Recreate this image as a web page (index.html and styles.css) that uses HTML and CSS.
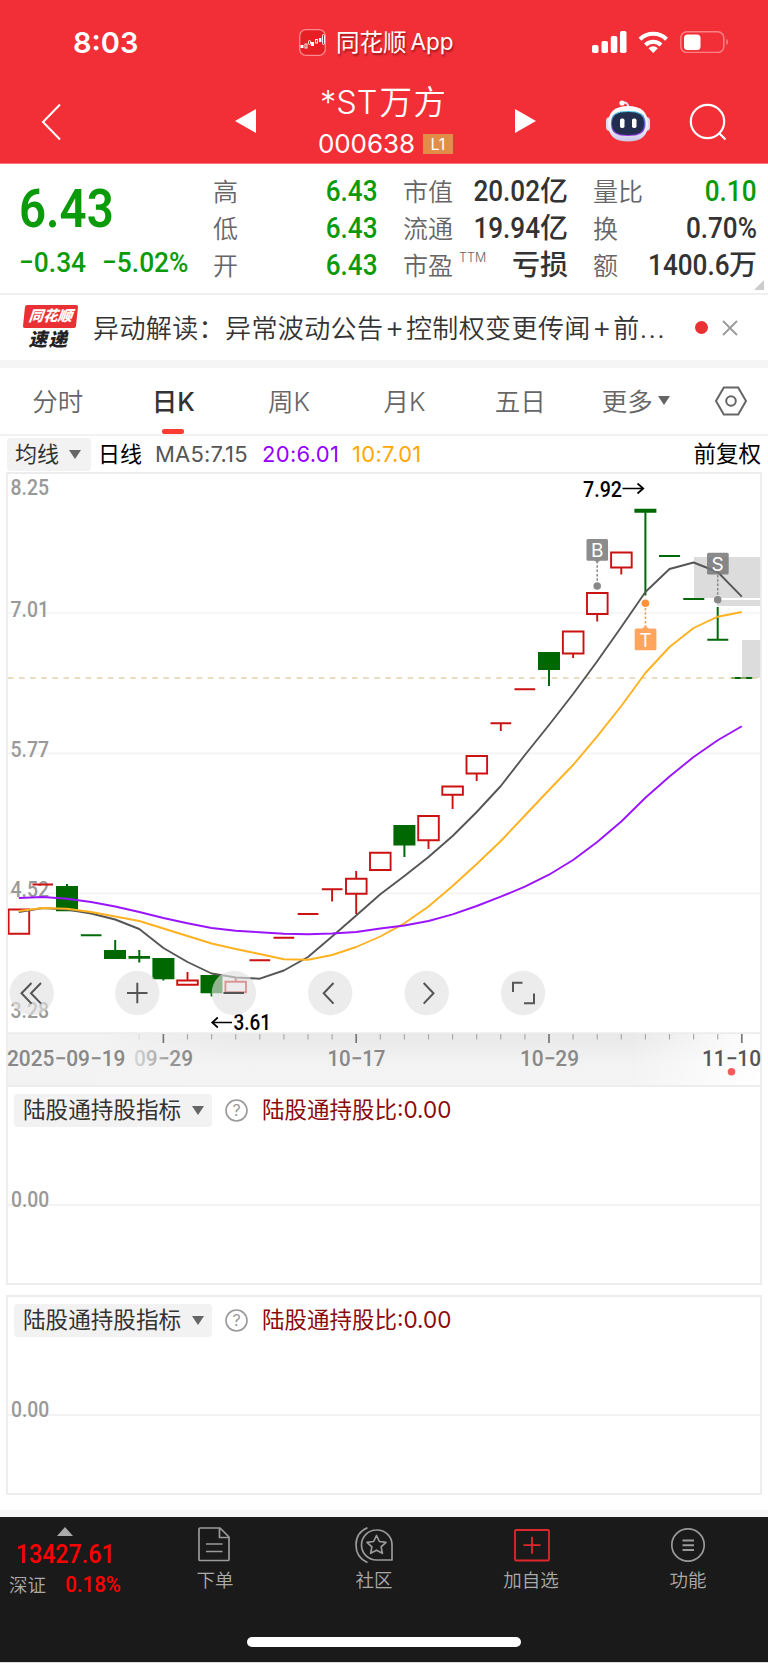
FILE: index.html
```html
<!DOCTYPE html>
<html lang="zh-CN">
<head>
<meta charset="utf-8">
<title>*ST万方 000638</title>
<link rel="stylesheet" href="styles.css">
</head>
<body>
<header class="top">
  <div class="status">
    <span class="clock">8:03</span>
    <span class="app">
      <svg class="app-icon" width="27" height="27" viewBox="0 0 27 27"><rect x=".7" y=".7" width="25.6" height="25.6" rx="6" fill="#e51f24" stroke="#f9898c" stroke-width="1.3"/><g fill="#fff"><rect x="1.5" y="16" width="3" height="3"/><rect x="12" y="13" width="3" height="4"/><rect x="20" y="9" width="2.4" height="4"/></g><g fill="none" stroke="#fff" stroke-width=".9"><rect x="6" y="15" width="2" height="4"/><rect x="9.500" y="11.500" width="2" height="4" rx="1"/><rect x="16.500" y="10.500" width="2" height="3.500"/><rect x="23.500" y="5.500" width="2" height="10" rx="1"/></g></svg>
      <span>同花顺</span><span class="app-latin">App</span>
    </span>
    <svg class="sys" width="136" height="22" viewBox="0 0 136 22">
      <g fill="#fff"><rect x="0" y="14" width="6.500" height="8" rx="1.800"/><rect x="9.500" y="10" width="6.500" height="12" rx="1.800"/><rect x="18.800" y="5" width="6.500" height="17" rx="1.800"/><rect x="28" y="0" width="6.500" height="22" rx="1.800"/></g>
      <g fill="none" stroke="#fff" stroke-width="4"><path d="M48 8.200a19 19 0 0 1 26.500 0"/><path d="M53.500 14a11 11 0 0 1 15.500 0"/></g><path d="M61.200 22l-4.700-4.800a6.800 6.800 0 0 1 9.400 0z" fill="#fff"/>
      <rect x="88.800" y=".8" width="43" height="20.800" rx="6" fill="none" stroke="#f88286" stroke-width="1.500"/><rect x="92" y="3.500" width="16.500" height="15.500" rx="3.500" fill="#fff"/><path d="M134.300 7.500q3.500 3.500 0 7z" fill="#f88286"/>
    </svg>
  </div>
  <div class="titlebar">
    <svg class="back" width="22" height="38" viewBox="0 0 22 38"><path d="M20 1.500L3 19l17 17.500" fill="none" stroke="#fff" stroke-width="2"/></svg>
    <svg class="prev" width="21" height="24" viewBox="0 0 21 24"><path d="M21 0v24L0 12z" fill="#fff"/></svg>
    <div class="stock">
      <div class="name">*ST<span class="cn">万方</span></div>
      <div class="code">000638<span class="level">L1</span></div>
    </div>
    <svg class="next" width="21" height="24" viewBox="0 0 21 24"><path d="M0 0v24l21-12z" fill="#fff"/></svg>
    <svg class="robot" width="46" height="44" viewBox="0 0 46 44">
      <defs><linearGradient id="shell" x1="0" y1="0" x2="0" y2="1"><stop offset="0" stop-color="#fff"/><stop offset=".7" stop-color="#e9e9fa"/><stop offset="1" stop-color="#c9c4e4"/></linearGradient><linearGradient id="visor" x1="0" y1="0" x2="0" y2="1"><stop offset="0" stop-color="#45bfe0"/><stop offset=".5" stop-color="#5a5fc8"/><stop offset="1" stop-color="#9b3ee0"/></linearGradient></defs>
      <path d="M17 4q6-2 6.500 5" fill="none" stroke="#e8e5f5" stroke-width="2"/><circle cx="17" cy="4" r="2.600" fill="#fff"/>
      <rect x="1" y="18" width="8" height="14" rx="4" fill="#dcdcf0"/><rect x="37" y="18" width="8" height="14" rx="4" fill="#dcdcf0"/>
      <path d="M23 7C36 7 43 13 43 25S36 42.500 23 42.500 3 37 3 25 10 7 23 7z" fill="url(#shell)"/>
      <path d="M23 12C35 12 40.500 15 40.500 24.500S35 37 23 37 6 34 6 24.500 11 12 23 12z" fill="url(#visor)"/>
      <path d="M23 13C34 13 39 16 39 24.500S34 36 23 36 7 33 7 24.500 12 13 23 13z" fill="#232d4d"/>
      <rect x="15" y="19.500" width="4.500" height="9.500" rx="1.800" fill="#fff"/><rect x="27" y="19.500" width="4.500" height="9.500" rx="1.800" fill="#fff"/>
    </svg>
    <svg class="search" width="38" height="38" viewBox="0 0 38 38" fill="none" stroke="#fff" stroke-width="2.200"><circle cx="18.500" cy="18.500" r="16.700"/><path d="M30 30l6.500 6.500"/></svg>
  </div>
</header>

<section class="quote">
  <div class="price">
    <div class="last"><span class="n">6.43</span></div>
    <div class="change"><span class="n chg">−0.34</span><span class="n pct">−5.02%</span></div>
  </div>
  <dl class="col c1">
    <dt>高</dt><dd class="down"><span class="n">6.43</span></dd>
    <dt>低</dt><dd class="down"><span class="n">6.43</span></dd>
    <dt>开</dt><dd class="down"><span class="n">6.43</span></dd>
  </dl>
  <dl class="col c2">
    <dt>市值</dt><dd><span class="n">20.02</span>亿</dd>
    <dt>流通</dt><dd><span class="n">19.94</span>亿</dd>
    <dt>市盈<sup>TTM</sup></dt><dd>亏损</dd>
  </dl>
  <dl class="col c3">
    <dt>量比</dt><dd class="down"><span class="n">0.10</span></dd>
    <dt>换</dt><dd><span class="n">0.70%</span></dd>
    <dt>额</dt><dd><span class="n">1400.6</span>万</dd>
  </dl>
  <i class="corner"></i>
</section>

<section class="news">
  <div class="news-logo"><span class="logo-top">同花顺</span><span class="logo-bottom">速递</span></div>
  <p class="news-text">异动解读：异常波动公告<span class="plus">+</span>控制权变更传闻<span class="plus">+</span>前<span class="dots">...</span></p>
  <i class="dot"></i>
  <svg class="close" width="16" height="16" viewBox="0 0 16 16"><path d="M1 1l14 14M15 1L1 15" stroke="#999" stroke-width="1.800"/></svg>
</section>

<nav class="tabs">
  <span>分时</span><span class="on">日K</span><span>周K</span><span>月K</span><span>五日</span><span>更多<i class="tri"></i></span>
  <span><svg width="32" height="30" viewBox="0 0 32 30" fill="none" stroke="#666" stroke-width="2"><path d="M8.800 1.500h14.400L31 15l-7.800 13.500H8.800L1 15z"/><circle cx="16" cy="15" r="4.800"/></svg></span>
</nav>

<div class="legend">
  <span class="chip">均线<i class="tri"></i></span>
  <span class="period">日线</span>
  <span class="ma5">MA5:7.15</span><span class="ma20">20:6.01</span><span class="ma10">10:7.01</span>
  <span class="adjust">前复权</span>
</div>

<svg class="chart" width="768" height="613" viewBox="0 472 768 613">
  <defs>
    <linearGradient id="barV" x1="0" y1="0" x2="0" y2="1"><stop offset="0" stop-color="#e8e8e8"/><stop offset=".6" stop-color="#f3f3f3"/><stop offset="1" stop-color="#f4f4f4"/></linearGradient>
    <linearGradient id="fadeR" x1="0" x2="1" y1="0" y2="0"><stop offset="0" stop-color="#fff" stop-opacity="0"/><stop offset="1" stop-color="#fff"/></linearGradient>
    <linearGradient id="fadeL" x1="0" x2="1" y1="0" y2="0"><stop offset="0" stop-color="#f3f3f3"/><stop offset=".35" stop-color="#f3f3f3"/><stop offset="1" stop-color="#f3f3f3" stop-opacity="0"/></linearGradient>
    <linearGradient id="dateFade" gradientUnits="userSpaceOnUse" x1="134" x2="192" y1="0" y2="0"><stop offset="0" stop-color="#d8d8d8"/><stop offset=".6" stop-color="#999"/><stop offset="1" stop-color="#888"/></linearGradient>
  </defs>
  <path d="M8 613H761M8 753.300H761M8 893.300H761" stroke="#f3f3f3" stroke-width="1.700"/>
  <path d="M694 557h67v41h-67zM717 600h44v6h-44zM742 640h19v38h-19z" fill="#dcdcdc"/>
  <g class="axis">
    <text x="10.500" y="494.500" textLength="38.500" lengthAdjust="spacingAndGlyphs">8.25</text>
    <text x="10.500" y="616.500" textLength="38.500" lengthAdjust="spacingAndGlyphs">7.01</text>
    <text x="10.500" y="756.500" textLength="38.500" lengthAdjust="spacingAndGlyphs">5.77</text>
    <text x="10.500" y="896.500" textLength="38.500" lengthAdjust="spacingAndGlyphs">4.52</text>
    <text x="10.500" y="1018" textLength="38.500" lengthAdjust="spacingAndGlyphs">3.28</text>
  </g>
  <g class="rise">
    <path d="M8.600 909.500h20.600v24.200H8.600zM177.200 980.500h20.600v4.200h-20.600zM225.400 981.700h20.600v10.600h-20.600zM346 878.700h20.600v15h-20.600zM370 852.700h20.600v17.300H370zM418.200 816h20.600v24.200h-20.600zM442.300 786.500h20.600v8.300h-20.600zM466.500 756h20.600v17.500h-20.600zM562.900 631.500h20.600v22h-20.600zM587 593h20.600v21H587zM611.100 552.500h20.600v15h-20.600z"/>
    <path d="M32.500 884.500h20.500M249.500 960.300h20.700M273.500 937.700h20.700M297.700 914h20.700M321.800 889.200h20.700M490.500 723.300h20.700M514.500 689.300h20.700M187.500 972v8M235.700 977v4.500M332.100 889v12.500M356.200 871v8M356.200 894v20M428.500 840v9M452.600 795v14M476.700 774v7M500.800 723v8M573.100 654v4M597.200 614v7.500M621.300 568v6.500"/>
  </g>
  <g class="fall">
    <path class="solid" d="M56 886h22v25.300H56zM104 950h22v9h-22zM128.500 956h21.500v2.800h-21.500zM152.400 958h22v21.300h-22zM200.500 975h22v18.300h-22zM393.400 825h22v20.500h-22zM538 652h22v18h-22zM634.400 508.800h22v4h-22z"/>
    <path d="M67 884v4M80.800 935.300h20.700M115.200 940v12M139.300 950v12.500M163.400 978v2.500M211.600 992v4.500M404.400 845v12M549 669v17M645.400 512v83.500M659 556h21M683.300 599h21M717.700 607v33M707.300 639.700h21M731.500 678h21"/>
  </g>
  <path d="M8 678H761" stroke="#dfc9a0" stroke-width="1.500" stroke-dasharray="5.500 5.600" opacity=".85"/>
  <g fill="none" stroke-width="1.900" stroke-linejoin="round">
    <path stroke="#555" d="M18.800 912L42.900 908 67 909.500 91.100 913.500 115.200 919.500 139.300 929 163.400 948 187.500 962 211.600 973.500 235.700 977.500 259.800 978.700 283.900 970.500 308 957 332.100 936.500 356.200 915.500 380.300 894.300 404.400 876 428.500 857 452.600 836 476.700 812 500.800 786 524.900 755 549 725 573.100 694 597.200 661.300 621.300 627 645.400 592 669.500 569 693.600 562.500 717.700 572 741.800 596.700"/>
    <path stroke="#ffb11f" d="M18.800 911L42.900 908 67 908.700 91.100 912 115.200 916.500 139.300 921 163.400 928.500 187.500 936 211.600 943.500 235.700 949 259.800 954 283.900 959.200 308 959.700 332.100 955 356.200 947 380.300 936.500 404.400 923.300 428.500 906.500 452.600 886 476.700 864 500.800 841 524.900 815.500 549 790 573.100 765 597.200 736.300 621.300 706 645.400 673 669.500 647 693.600 628 717.700 616.700 741.800 612"/>
    <path stroke="#9a14ff" d="M18.800 898L42.900 897 67 898.700 91.100 902 115.200 906.500 139.300 912 163.400 918 187.500 923.300 211.600 928 235.700 930.700 259.800 932.300 283.900 933.700 308 934.200 332.100 933.500 356.200 932 380.300 928.500 404.400 925.500 428.500 921 452.600 914.300 476.700 906 500.800 896.700 524.900 886.700 549 874.700 573.100 860 597.200 842 621.300 821.500 645.400 797.700 669.500 776.500 693.600 757 717.700 740.300 741.800 726.300"/>
  </g>
  <g class="marks">
    <g stroke="#888" stroke-width="1.500" stroke-dasharray="2.500 1.800"><path d="M597.200 561v21"/><path d="M717.700 575v21"/><path stroke="#ff9a47" d="M645.400 608v20"/></g>
    <circle cx="597.200" cy="586" r="3.800" fill="#888"/><circle cx="717.700" cy="599.700" r="3.800" fill="#888"/><circle cx="645.400" cy="603.300" r="3.800" fill="#ff9138"/>
    <rect x="586.500" y="539" width="21.500" height="21.700" rx="1.500" fill="#8c8c8c"/><path d="M594 560h6.500l-3.200 3z" fill="#8c8c8c"/>
    <rect x="707" y="552.700" width="21.700" height="21.700" rx="1.500" fill="#777" opacity=".85"/>
    <rect x="634.700" y="628.500" width="21.700" height="21.700" rx="1.500" fill="#ffa55e"/><path d="M642 629l3.400-3.500 3.400 3.500z" fill="#ffa55e"/>
    <text x="597.200" y="557">B</text><text x="717.700" y="570.700">S</text><text x="645.400" y="646.500">T</text>
  </g>
  <g class="peak">
    <text x="583" y="496.500" textLength="39" lengthAdjust="spacingAndGlyphs">7.92</text>
    <text x="233.500" y="1030" textLength="37.500" lengthAdjust="spacingAndGlyphs">3.61</text>
    <path d="M622.500 488.500h20.500M637.500 483.500l5.800 5-5.800 5M232 1022.500h-19.500M217.800 1017.500l-5.600 5 5.600 5"/>
  </g>
  <g class="tools">
    <circle cx="31.700" cy="993" r="22.200"/><circle cx="137.300" cy="993" r="22.200"/><circle cx="233.900" cy="993" r="22.200"/><circle cx="330.200" cy="993" r="22.200"/><circle cx="426.700" cy="993" r="22.200"/><circle cx="523" cy="993" r="22.200"/>
    <path d="M31.500 983L21.500 993.300l10 10.300M41 983l-10 10.300 10 10.300M127 993h20.500M137.300 982.700v20.600M223.500 993h20.500M333.500 983l-9.800 10.300 9.800 10.300M423.700 983l9.800 10.300-9.800 10.300"/>
    <path stroke-width="2.600" d="M513 992v-9.300h9.500M524 1003.200h10V993.500"/>
  </g>
  <rect x="6.500" y="1033" width="755.500" height="53" fill="url(#barV)"/>
  <rect x="6.500" y="1034" width="240" height="52" fill="url(#fadeL)"/>
  <rect x="630" y="1034" width="132" height="52" fill="url(#fadeR)"/>
  <path d="M7 1086V473H761V1086M7 1033.200H761" fill="none" stroke="#ededed" stroke-width="1.800"/>
  <path stroke="#aaa" stroke-width="1.200" d="M187.500 1034v5.500M211.600 1034v5.500M235.700 1034v5.500M259.800 1034v5.500M283.900 1034v5.500M308 1034v5.500M332.100 1034v5.500M380.300 1034v5.500M404.400 1034v5.500M428.500 1034v5.500M452.600 1034v5.500M476.700 1034v5.500M500.800 1034v5.500M524.900 1034v5.500M573.100 1034v5.500M597.200 1034v5.500M621.300 1034v5.500M645.400 1034v5.500M669.500 1034v5.500M693.600 1034v5.500M717.700 1034v5.500"/>
  <path stroke="#ddd" stroke-width="1.200" d="M139.300 1034v5.500"/>
  <path stroke="#777" stroke-width="1.700" d="M163.400 1034v9M356.200 1034v9M549 1034v9M741.800 1034v9"/>
  <g class="dates">
    <text x="7" y="1066" textLength="118.500" lengthAdjust="spacingAndGlyphs">2025−09−19</text>
    <text x="134" y="1066" textLength="59" lengthAdjust="spacingAndGlyphs" fill="url(#dateFade)">09−29</text>
    <text x="327.500" y="1066" textLength="58" lengthAdjust="spacingAndGlyphs">10−17</text>
    <text x="520" y="1066" textLength="59" lengthAdjust="spacingAndGlyphs">10−29</text>
    <text class="now" x="702" y="1066" textLength="59" lengthAdjust="spacingAndGlyphs">11−10</text>
  </g>
  <circle cx="731.500" cy="1071.700" r="3.800" fill="#f55d5d"/>
</svg>

<section class="panel">
  <div class="panel-head"><span class="chip wide">陆股通持股指标<i class="tri"></i></span>
    <svg class="help" width="23" height="23" viewBox="0 0 23 23"><circle cx="11.500" cy="11.500" r="10.500" fill="none" stroke="#999" stroke-width="1.600"/><text x="11.500" y="17" text-anchor="middle">?</text></svg>
    <span class="ratio">陆股通持股比:0.00</span></div>
  <div class="zero"><span class="n">0.00</span></div>
</section>
<section class="panel">
  <div class="panel-head"><span class="chip wide">陆股通持股指标<i class="tri"></i></span>
    <svg class="help" width="23" height="23" viewBox="0 0 23 23"><circle cx="11.500" cy="11.500" r="10.500" fill="none" stroke="#999" stroke-width="1.600"/><text x="11.500" y="17" text-anchor="middle">?</text></svg>
    <span class="ratio">陆股通持股比:0.00</span></div>
  <div class="zero"><span class="n">0.00</span></div>
</section>

<footer class="bottom">
  <div class="index">
    <i class="up"></i>
    <div class="idx-val"><span class="n">13427.61</span></div>
    <div class="idx-row"><span>深证</span><span class="n">0.18%</span></div>
  </div>
  <div class="item i1"><svg width="34" height="36" viewBox="0 0 34 36" fill="none" stroke="#9a9a9a" stroke-width="1.700" stroke-linejoin="round"><path d="M3 1h20l9 9v22.500q0 1-1 1H3q-1 0-1-1V2q0-1 1-1zM22.500 1v9.500H32M9 17h16.500M9 24.500h16.500"/></svg><span>下单</span></div>
  <div class="item i2"><svg width="40" height="36" viewBox="0 0 40 36" fill="none" stroke="#9a9a9a" stroke-width="1.700" stroke-linejoin="round"><path d="M13.500.8Q2 5.500 2 18t11.500 17.500M22.500 3A15 15 0 0 1 38 18v15H22.500A15 15 0 0 1 22.500 3z"/><path d="M22.500 8.500l2.900 6 6.600.8-4.900 4.500 1.300 6.500-5.900-3.100-5.900 3.100 1.300-6.500-4.900-4.500 6.600-.8z"/></svg><span>社区</span></div>
  <div class="item i3"><svg width="36" height="36" viewBox="0 0 36 36" fill="none" stroke="#e0282c" stroke-width="1.800"><rect x="1" y="3" width="34" height="30.500" rx="1"/><path d="M9.500 18.200h17M18 9.800v17"/></svg><span>加自选</span></div>
  <div class="item i4"><svg width="36" height="36" viewBox="0 0 36 36" fill="none" stroke="#9a9a9a" stroke-width="1.700"><circle cx="18" cy="18" r="16.200"/><path d="M12.500 13.500h11.500M12.500 18.200h11.500M12.500 23h11.500" stroke-width="2"/></svg><span>功能</span></div>
  <i class="home"></i>
</footer>
</body>
</html>
```
FILE: styles.css
```css
* { box-sizing: border-box; }
body { margin: 0; width: 768px; height: 1663px; overflow: hidden; background: #fff; color: #333; font-family: Inter, "Noto Sans CJK SC", sans-serif; line-height: 1; }
svg { display: block; flex: none; }
dl, dd, p { margin: 0; }
i { flex: none; }

/* compressed numerals */
.n { display: inline-block; font-family: Roboto, sans-serif; transform: scaleX(.9); transform-origin: right center; white-space: nowrap; }

.top { height: 164px; background: #f22f37; border-bottom: 1px solid #f7777c; color: #fff; }
.status { height: 84px; display: flex; align-items: center; }
.clock { width: 225px; padding-left: 73px; font-size: 29px; font-weight: 600; }
.app { display: flex; align-items: center; margin-left: 74px; width: 293px; font-size: 23.5px; text-shadow: 1px 2px 2px rgba(90,0,0,.55); }
.app span { padding-top: 1px; }
.app-icon { margin-right: 10px; }
.app-latin { margin-left: 4px; font-size: 22.5px; }
.titlebar { height: 79px; display: flex; align-items: flex-start; }
.back { margin: 19px 0 0 40px; }
.prev { margin: 25px 0 0 173px; }
.stock { width: 132px; margin-left: 62px; padding-top: 1px; white-space: nowrap; }
.name { height: 36px; line-height: 36px; margin-left: 2px; font-size: 32.5px; font-weight: 350; display: flex; }
.name .cn { margin-left: 2px; letter-spacing: 1.500px; }
.code { height: 28px; margin-top: 9px; display: flex; align-items: center; font-size: 26px; letter-spacing: -.1px; }
.level { flex: none; width: 30px; height: 20px; margin-left: 8px; background: #e38d4b; font-size: 16px; line-height: 20px; text-align: center; }
.next { margin: 25px 0 0 65px; }
.robot { margin: 15px 0 0 69px; }
.search { margin: 19px 0 0 38px; }

.quote { position: relative; height: 131px; border-bottom: 2px solid #f0f0f0; display: flex; }
.price { width: 213px; padding-left: 21px; color: #0a9a0a; }
.price .n { transform-origin: left center; }
.last { height: 84px; padding-top: 16px; font-size: 54.500px; font-weight: 600; line-height: 54px; margin-left: -2px; }
.last .n { transform: scaleX(.87); }
.change { display: flex; height: 30px; font-size: 28.500px; line-height: 30px; margin-left: -2px; font-weight: 500; }
.change .n { transform: scaleX(.925); }
.chg { width: 83px; }
.col { display: grid; grid-template-columns: auto minmax(0, 1fr); grid-auto-rows: 37px; padding-top: 9px; line-height: 37px; }
.col dt { font-size: 25px; font-weight: 350; color: #666; white-space: nowrap; padding-top: 1px; height: 37px; }
.col dd { display: flex; justify-content: flex-end; font-size: 28px; font-weight: 500; color: #333; white-space: nowrap; }
.col dd .n { font-size: 29px; }
.col .down { color: #0a9a0a; }
.c1 { width: 165px; }
.c2 { width: 165px; margin-left: 25px; }
.c3 { width: 164px; margin-left: 25px; }
.col sup { display: inline-block; vertical-align: 13px; margin-left: 6px; font-size: 12.500px; line-height: 1; }
.corner { position: absolute; right: 4px; bottom: 3px; border-left: 10px solid transparent; border-bottom: 10px solid #ccc; }

.news { height: 73px; border-bottom: 8px solid #f5f5f5; display: flex; align-items: center; }
.news-logo { width: 56px; margin-left: 22px; display: flex; flex-direction: column; align-items: center; font-weight: 900; font-style: italic; }
.logo-top { width: 53px; height: 23px; background: #e93034; color: #fff; border-radius: 2px; transform: skewX(-6deg); font-size: 14.500px; line-height: 21px; text-align: center; }
.logo-bottom { margin-left: -3px; font-size: 18.500px; line-height: 22px; letter-spacing: 1.500px; color: #222; }
.news-text { width: 580px; margin-left: 15px; font-size: 26px; letter-spacing: .4px; font-weight: 350; white-space: nowrap; color: #333; }
.plus { display: inline-block; width: 22.500px; text-align: center; font-size: 30px; line-height: 26px; }
.dots { letter-spacing: 1.500px; }
.dot { width: 13px; height: 13px; border-radius: 50%; background: #e93034; margin-left: 22px; }
.close { margin-left: 14px; }

.tri { display: inline-block; border: 6px solid transparent; border-top: 9px solid #666; border-bottom: 0; }
.tabs { height: 68px; border-bottom: 2px solid #f2f2f2; display: grid; grid-template-columns: repeat(6, 115.600px) 1fr; font-size: 25.500px; font-weight: 350; color: #666; }
.tabs span { position: relative; display: flex; align-items: center; justify-content: center; padding-top: 1px; }
.tabs svg { margin-top: -2px; }
.tabs .tri { margin-left: 5px; margin-top: -3px; }
.tabs .on { color: #333; font-weight: 500; }
.tabs .on::after { content: ""; position: absolute; bottom: 0; width: 22px; height: 5.500px; border-radius: 2px; background: #fc3c30; }

.legend { height: 36px; display: flex; align-items: center; font-size: 22px; color: #222; white-space: nowrap; }
.chip { display: flex; align-items: center; width: 84px; height: 33px; margin-left: 7px; padding-left: 8px; border-radius: 4px; background: #f2f2f2; color: #333; font-size: 22px; }
.chip .tri { margin-left: 10px; }
.period { margin-left: 7px; width: 57px; color: #000; }
.ma5 { width: 107px; color: #555; letter-spacing: .2px; }
.ma20 { width: 90px; color: #9500ff; letter-spacing: .3px; }
.ma10 { width: 80px; color: #ffa800; letter-spacing: .3px; }
.adjust { margin-left: auto; margin-right: 7px; color: #000; font-size: 22.500px; }

.chart text { font-family: Roboto, sans-serif; font-size: 21.500px; }
.axis text { fill: #999; font-weight: 500; }
.rise path { fill: none; stroke: #cc1111; stroke-width: 1.900px; }
.fall path { fill: none; stroke: #006a0a; stroke-width: 2px; }
.fall .solid { fill: #006800; stroke: none; }
.marks text { font-family: Inter, sans-serif; font-size: 19px; fill: #fff; text-anchor: middle; }
.peak text { font-weight: 500; fill: #000; }
.peak path { fill: none; stroke: #000; stroke-width: 1.700px; }
.tools circle { fill: #e2e2e2; fill-opacity: .64; }
.tools path { fill: none; stroke: #555; stroke-width: 2px; }
.dates text { fill: #888; font-weight: 500; }
.dates text[fill] { fill: url(#dateFade); }
.dates .now { fill: #555; font-weight: 500; }

.panel { width: 756px; height: 200px; margin: 0 0 10px 6px; border: 2px solid #ededed; }
.panel-head { height: 46px; display: flex; align-items: center; }
.wide { width: 198px; margin-left: 6px; padding-left: 9px; font-size: 22.600px; white-space: nowrap; }
.wide .tri { margin-left: 11px; }
.help { margin-left: 13px; }
.help text { font: 16px Inter, sans-serif; fill: #999; }
.ratio { margin-left: 14px; font-size: 22.500px; color: #8b0a0a; white-space: nowrap; }
.zero { height: 73px; padding: 56px 0 0 3px; font-size: 21.500px; line-height: 22px; color: #999; background: linear-gradient(#f3f3f3, #f3f3f3) 0 100% / 100% 2px no-repeat; }
.zero .n { display: block; width: 60px; transform-origin: left center; font-weight: 500; line-height: 22px; }

.bottom { position: relative; height: 153px; margin-top: 15px; border-top: 7px solid #f5f5f5; border-bottom: 1px solid #ddd; background: #1a1a1a; color: #aaa; display: flex; }
.index { width: 140px; display: flex; flex-direction: column; }
.up { margin: 10px 0 0 57px; width: 0; border: 8px solid transparent; border-bottom: 9px solid #aaa; border-top: 0; }
.idx-val { width: 131px; height: 24px; margin-top: 6px; text-align: center; font-size: 25px; line-height: 24px; color: #f00; font-weight: 500; }
.idx-val .n { transform: scaleX(.93); transform-origin: center; }
.idx-row { display: flex; justify-content: space-between; align-items: center; width: 121px; height: 20px; margin-top: 9px; padding-left: 9px; font-size: 18.500px; font-weight: 350; }
.idx-row .n { color: #f00; font-size: 22px; font-weight: 500; transform: scaleX(.93); }
.item { position: absolute; top: 10px; width: 100px; display: flex; flex-direction: column; align-items: center; gap: 7px; font-size: 18.500px; font-weight: 350; line-height: 20px; }
.i1 { left: 165px; }
.i1 svg { margin-left: -2px; }
.i2 { left: 324px; }
.i3 { left: 481px; }
.i3 svg { margin-left: 2px; }
.i4 { left: 638px; }
.home { position: absolute; left: 247px; bottom: 15px; width: 274px; height: 10px; border-radius: 5px; background: #fff; }
```
